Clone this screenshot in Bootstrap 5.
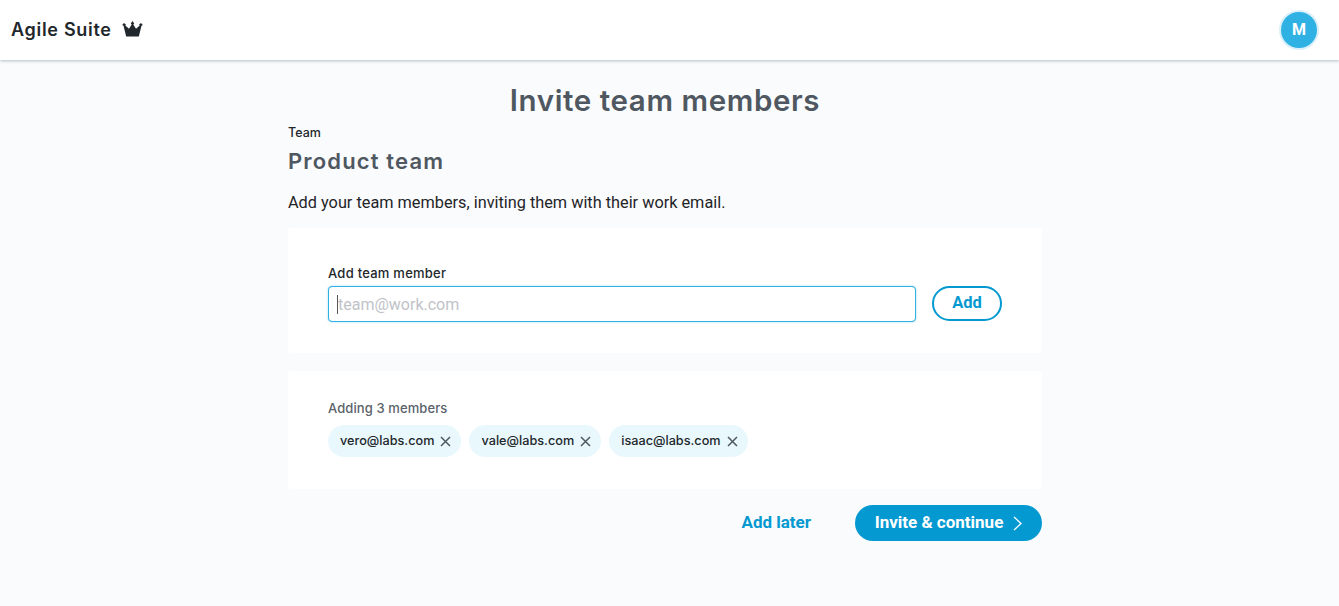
<!doctype html>
<html lang="en">
<head>
<meta charset="utf-8">
<title>Invite team members</title>
<link href="https://cdn.jsdelivr.net/npm/bootstrap@5.3.0/dist/css/bootstrap.min.css" rel="stylesheet">
<style>
html,body{height:100%}
body{background:#fafbfd;font-family:"Roboto","Liberation Sans",sans-serif;color:#1f2428;overflow:hidden}
.topbar{height:60px;background:#fff;box-shadow:0 1px 3px rgba(90,115,140,.45);padding:0 22px 0 11px}
.brand-name{font-family:"Inter",sans-serif;font-weight:600;font-size:18px;line-height:18px;color:#22272b;letter-spacing:.7px;margin-top:-1px}
.crown-mark{margin-left:2px;margin-top:-2px}
.avatar{width:36px;height:36px;border-radius:50%;background:#2fb1e4;color:#fff;font-weight:700;font-size:16px;box-shadow:0 0 0 2px #d9f0fa;margin-top:-1px}
.sheet{width:754px;margin-left:288px}
.page-title{font-family:"Inter",sans-serif;font-weight:600;font-size:29.500px;line-height:36px;letter-spacing:.6px;color:#4f5861;margin:22px 0 0;text-align:center}
.eyebrow{font-family:"Inter",sans-serif;font-weight:500;font-size:12.500px;line-height:14px;margin-top:8px;color:#22272b}
.team-name{font-family:"Inter",sans-serif;font-weight:600;font-size:22px;line-height:26px;letter-spacing:1.15px;color:#4f5861;margin:8px 0 0}
.intro{font-size:16.300px;line-height:20px;margin:19px 0 15px;color:#1f2428}
.panel{background:#fff;border-radius:4px}
.panel-add{height:125px;padding:38px 40px 0}
.panel-list{height:118px;margin-top:18px;padding:30px 40px 0}
.field-label{font-family:"Inter",sans-serif;font-weight:500;font-size:13px;line-height:15px;letter-spacing:.25px;margin-bottom:5px;color:#22272b}
.email-wrap{width:588px}
.email-input{height:36px;border:1px solid #2fb1e4;border-radius:4px;padding:0 9px;font-size:16px;box-shadow:0 0 2px rgba(47,177,228,.5)}
.email-input::placeholder{color:#bfc3c8}
.caret-mark{position:absolute;left:9px;top:9px;width:1px;height:19px;background:#555}
.pill-add{width:70px;height:35px;border:2px solid #0499d0;border-radius:18px;color:#0499d0;font-weight:700;font-size:16.500px;padding:0;background:#fff;margin:0 0 1px 16px}
.count-label{font-family:"Inter",sans-serif;font-weight:500;font-size:13px;line-height:15px;letter-spacing:.1px;color:#5a626a;margin-bottom:9px}
.chip{height:32px;background:#e9f8fd;border-radius:16px;padding:0 10px 0 12px;font-family:"Inter",sans-serif;font-weight:500;font-size:12.700px;color:#22272b;gap:6px}
.footer-actions{margin-top:16px;gap:44px}
.later{color:#0499d0;font-weight:700;font-size:17px;text-decoration:none}
.go{width:187px;height:36px;border-radius:18px;background:#0499d0;color:#fff;font-weight:700;font-size:17px;border:0;gap:10px;padding:0}
</style>
</head>
<body>
<nav class="topbar d-flex align-items-center justify-content-between">
  <div class="d-flex align-items-center gap-2">
    <span class="brand-name">Agile Suite</span>
    <svg class="crown-mark" width="21" height="16" viewBox="0 0 21 16" aria-hidden="true"><path fill="#22272b" d="M10.500 0l1.700 2.600-.9.900 2.700 4.200 3.700-3.200-.6-.9L19 2l1.800 1.900-1.300.9-2.700 10.700H4.200L1.500 4.800.2 3.900 2 2l1.900 1.600-.6.900L7 7.700l2.700-4.200-.9-.9z"/></svg>
  </div>
  <div class="avatar d-flex align-items-center justify-content-center">M</div>
</nav>
<main class="sheet">
  <h1 class="page-title">Invite team members</h1>
  <div class="eyebrow">Team</div>
  <h2 class="team-name">Product team</h2>
  <p class="intro">Add your team members, inviting them with their work email.</p>
  <section class="panel panel-add">
    <div class="field-label">Add team member</div>
    <div class="d-flex align-items-center">
      <div class="email-wrap position-relative">
        <input class="form-control email-input" type="text" placeholder="team@work.com">
        <span class="caret-mark"></span>
      </div>
      <button class="btn pill-add" type="button">Add</button>
    </div>
  </section>
  <section class="panel panel-list">
    <div class="count-label">Adding 3 members</div>
    <div class="d-flex gap-2">
      <span class="chip d-inline-flex align-items-center">vero@labs.com
        <svg width="11" height="11" viewBox="0 0 11 11" aria-hidden="true"><path d="M1 1l9 9M10 1l-9 9" stroke="#4f5861" stroke-width="1.500" fill="none"/></svg></span>
      <span class="chip d-inline-flex align-items-center">vale@labs.com
        <svg width="11" height="11" viewBox="0 0 11 11" aria-hidden="true"><path d="M1 1l9 9M10 1l-9 9" stroke="#4f5861" stroke-width="1.500" fill="none"/></svg></span>
      <span class="chip d-inline-flex align-items-center">isaac@labs.com
        <svg width="11" height="11" viewBox="0 0 11 11" aria-hidden="true"><path d="M1 1l9 9M10 1l-9 9" stroke="#4f5861" stroke-width="1.500" fill="none"/></svg></span>
    </div>
  </section>
  <div class="footer-actions d-flex align-items-center justify-content-end">
    <a class="later" href="#">Add later</a>
    <button class="btn go d-flex align-items-center justify-content-center" type="button">Invite &amp; continue
      <svg width="9" height="15" viewBox="0 0 9 15" aria-hidden="true"><path d="M1 1l7 6.500-7 6.500" stroke="#fff" stroke-width="1.300" fill="none"/></svg></button>
  </div>
</main>
</body>
</html>
